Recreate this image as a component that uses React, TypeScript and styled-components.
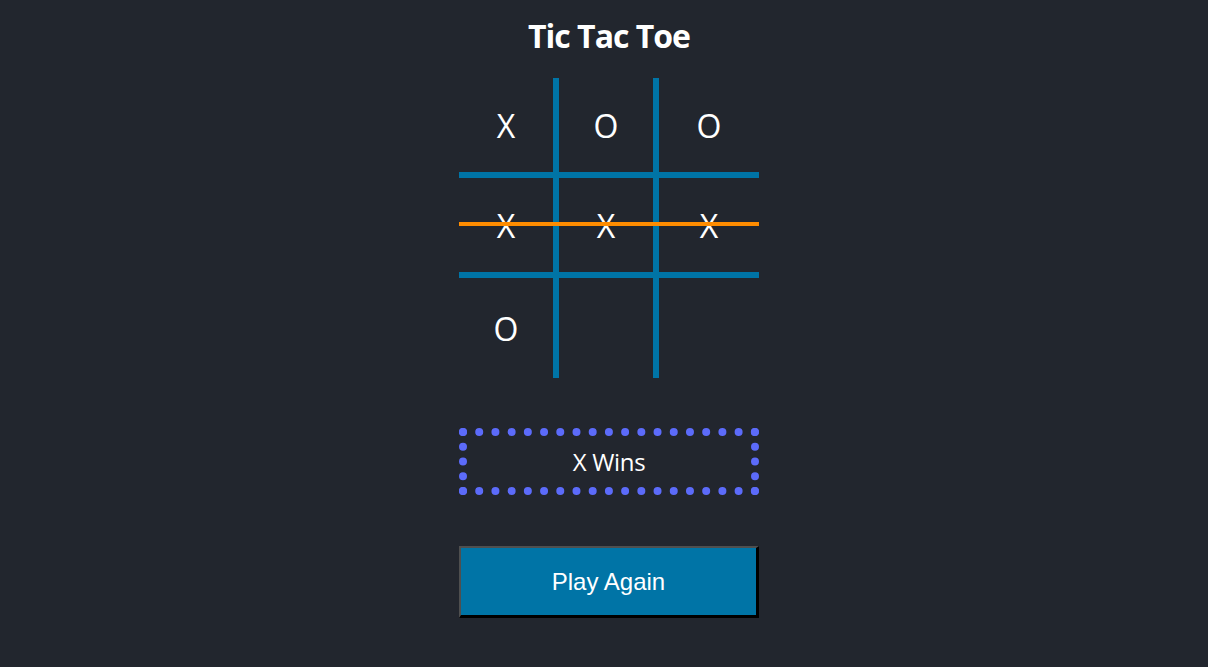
import React from "react";
import styled, { createGlobalStyle } from "styled-components";

const Global = createGlobalStyle`
  html, body {
    margin: 0;
    padding: 0;
    background: #22262e;
  }
  body {
    font-family: "Open Sans", "Noto Sans", sans-serif;
    color: #ffffff;
  }
`;

const Page = styled.div`
  box-sizing: border-box;
  min-height: 667px;
  padding-left: 10px;
  display: flex;
  flex-direction: column;
  align-items: center;
`;

const Title = styled.h1`
  margin: 14px 0 20px;
  font-family: "Open Sans", "Noto Sans", sans-serif;
  font-size: 32px;
  line-height: 44px;
  font-weight: 700;
  letter-spacing: -1px;
  color: #ffffff;
`;

const Board = styled.div`
  position: relative;
  display: grid;
  grid-template-columns: repeat(3, 100px);
  grid-template-rows: repeat(3, 100px);
`;

const Cell = styled.div<{ $right: boolean; $bottom: boolean }>`
  box-sizing: border-box;
  display: flex;
  align-items: center;
  justify-content: center;
  font-family: "Open Sans", "Noto Sans", sans-serif;
  font-size: 32px;
  color: #ffffff;
  border-right: ${(p) => (p.$right ? "6px solid #0074a6" : "none")};
  border-bottom: ${(p) => (p.$bottom ? "6px solid #0074a6" : "none")};
`;

const Strike = styled.div`
  position: absolute;
  left: 0;
  top: 48%;
  width: 100%;
  height: 4px;
  background: #ff8c00;
`;

const GameOver = styled.div`
  box-sizing: border-box;
  width: 300px;
  margin-top: 50px;
  padding: 9px 0;
  border: 8px dotted #5c6bfa;
  text-align: center;
  font-family: "Open Sans", "Noto Sans", sans-serif;
  font-size: 24px;
  line-height: 33px;
  letter-spacing: -0.3px;
  color: #ffffff;
`;

const ResetButton = styled.button`
  box-sizing: border-box;
  width: 300px;
  height: 72px;
  margin-top: 51px;
  padding: 0;
  background: #0074a6;
  color: #ffffff;
  font-family: "Liberation Sans", Arial, sans-serif;
  font-size: 24px;
  border-style: solid;
  border-width: 2px 3px 3px 2px;
  border-color: #4f4f4f #000000 #000000 #4f4f4f;
  cursor: pointer;
`;

const cells = ["X", "O", "O", "X", "X", "X", "O", "", ""];

export default function App() {
  return (
    <>
      <Global />
      <Page>
        <Title>Tic Tac Toe</Title>
        <Board>
          {cells.map((v, i) => (
            <Cell key={i} $right={i % 3 !== 2} $bottom={i < 6}>
              {v}
            </Cell>
          ))}
          <Strike />
        </Board>
        <GameOver>X Wins</GameOver>
        <ResetButton>Play Again</ResetButton>
      </Page>
    </>
  );
}
